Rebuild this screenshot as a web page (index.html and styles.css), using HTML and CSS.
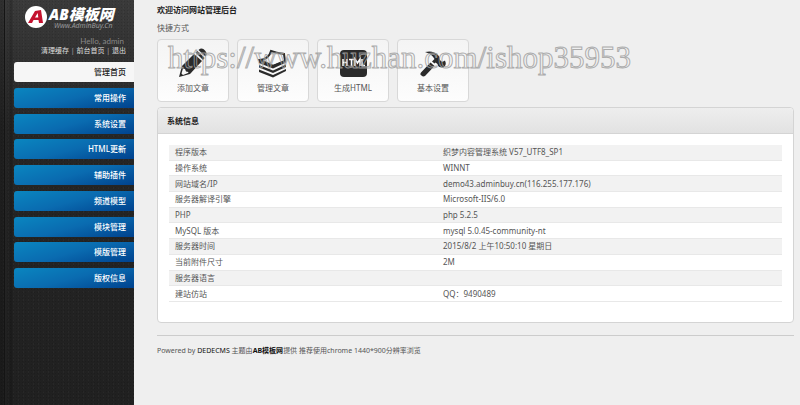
FILE: index.html
```html
<!DOCTYPE html>
<html lang="zh-CN">

<head>
    <meta charset="UTF-8">
    <meta name="viewport" content="width=device-width, initial-scale=1.0">
    <title>网站管理后台</title>
    <link rel="stylesheet" href="styles.css">
</head>

<body>
    <aside class="sidebar">
        <a class="logo" href="#">
            <svg class="logo-icon" viewBox="0 0 22 22" aria-hidden="true">
                <circle cx="11" cy="11" r="11" fill="#fff" />
                <path d="M3 17 L10 5 L16 4 L18 17 L14 17 L13.500 14 L8.500 14 L7 17 Z M10 11.500 L13.300 11.500 L12.700 7 Z" fill="#c4122f" fill-rule="evenodd" />
            </svg>
            <span class="logo-text">
                <strong>AB模板网</strong>
                <em>Www.AdminBuy.Cn</em>
            </span>
        </a>
        <div class="profile">
            <p class="hello">Hello, admin</p>
            <p class="profile-links"><a href="#">清理缓存</a> | <a href="#">前台首页</a> | <a href="#">退出</a></p>
        </div>
        <nav class="menu">
            <a class="current" href="#">管理首页</a>
            <a href="#">常用操作</a>
            <a href="#">系统设置</a>
            <a href="#">HTML更新</a>
            <a href="#">辅助插件</a>
            <a href="#">频道模型</a>
            <a href="#">模块管理</a>
            <a href="#">模版管理</a>
            <a href="#">版权信息</a>
        </nav>
    </aside>

    <main class="content">
        <h1>欢迎访问网站管理后台</h1>
        <p class="intro">快捷方式</p>

        <div class="shortcuts">
            <a class="shortcut" href="#">
                <svg viewBox="0 0 30 30" aria-hidden="true">
                    <path d="M1 29 L4 18 L16 6 L24 13 L12 26 Z" fill="#2b2b2b" />
                    <path d="M5 20.500 L7 21 L8 23.500 L10.500 24 L10 25 L5 27 L3.500 25.500 Z" fill="#fafafa" />
                    <path d="M17.500 4.500 L19.500 3 L26.500 10 L25 12 Z" fill="#2b2b2b" />
                    <path d="M20.500 2 Q24 -1 27 2.500 Q30 5.500 27.500 8.500 Z" fill="#2b2b2b" />
                </svg>
                <span>添加文章</span>
            </a>
            <a class="shortcut" href="#">
                <svg viewBox="0 0 30 30" aria-hidden="true">
                    <path d="M13 3 Q18 5 26 6 L27 13 L15 18 L2 12 Q11 11 13 3 Z" fill="#fafafa" stroke="#2b2b2b" stroke-width="2" />
                    <path d="M1 12 L15 17 L28 12 L28 14.500 L15 20.500 L1 15 Z M1 17 L15 22.500 L28 16.500 L28 19 L15 25 L1 19.500 Z M1 21.500 L15 27 L28 21 L28 23 L15 29.500 L1 24 Z" fill="#2b2b2b" />
                </svg>
                <span>管理文章</span>
            </a>
            <a class="shortcut" href="#">
                <svg viewBox="0 0 30 30" aria-hidden="true">
                    <rect x="2" y="2" width="27" height="27" rx="4" fill="#2b2b2b" />
                    <path d="M5 11 V18 M5 14.500 H9 M9 11 V18 M11 11.500 H16 M13.500 11.500 V18 M17 18 V11 L19.500 15 L22 11 V18 M24 11 V17.500 H27" fill="none" stroke="#fff" stroke-width="1.500" />
                </svg>
                <span>生成HTML</span>
            </a>
            <a class="shortcut" href="#">
                <svg viewBox="0 0 30 30" aria-hidden="true">
                    <path d="M3 24.500 L12.500 14.500 L16.500 18 L7 28 Q5 29 3.500 27.500 Q1.500 26.500 3 24.500 Z" fill="#2b2b2b" />
                    <path d="M7 4 Q15 2 20 7 Q22 9 22 12 Q24 15 27 12.500 Q29 17 25.500 19.500 Q20 20 19.500 16 L17.500 14.500 L16.500 15.500 L14 13.500 L16.500 11 Q14 6 7 4 Z" fill="#2b2b2b" />
                </svg>
                <span>基本设置</span>
            </a>
            <span class="watermark">https://www.huzhan.com/ishop35953</span>
        </div>

        <section class="panel">
            <h2>系统信息</h2>
            <table class="info">
                <tbody>
                    <tr><th scope="row">程序版本</th><td>织梦内容管理系统 V57_UTF8_SP1</td></tr>
                    <tr><th scope="row">操作系统</th><td>WINNT</td></tr>
                    <tr><th scope="row">网站域名/IP</th><td>demo43.adminbuy.cn(116.255.177.176)</td></tr>
                    <tr><th scope="row">服务器解译引擎</th><td>Microsoft-IIS/6.0</td></tr>
                    <tr><th scope="row">PHP</th><td>php 5.2.5</td></tr>
                    <tr><th scope="row">MySQL 版本</th><td>mysql 5.0.45-community-nt</td></tr>
                    <tr><th scope="row">服务器时间</th><td>2015/8/2 上午10:50:10 星期日</td></tr>
                    <tr><th scope="row">当前附件尺寸</th><td>2M</td></tr>
                    <tr><th scope="row">服务器语言</th><td></td></tr>
                    <tr><th scope="row">建站仿站</th><td>QQ：9490489</td></tr>
                </tbody>
            </table>
        </section>

        <footer class="footer">
            Powered by <a href="#">DEDECMS</a> 主题由<a href="#"><b>AB模板网</b></a>提供 推荐使用chrome 1440*900分辨率浏览
        </footer>
    </main>
</body>

</html>
```

FILE: styles.css
```css
* {
    margin: 0;
    padding: 0;
    box-sizing: border-box;
}

body {
    display: flex;
    min-height: 100vh;
    font-family: "Noto Sans", "Noto Sans CJK SC", sans-serif;
    font-size: 8px;
    line-height: 12px;
    color: #555;
    background: #efefef;
}

a {
    color: inherit;
    text-decoration: none;
}

/* sidebar */
.sidebar {
    flex: none;
    width: 134px;
    padding-left: 14px;
    background:
        linear-gradient(90deg, rgba(0, 0, 0, 0.2) 4px, #141414 4px, #141414 5px, transparent 5px, rgba(0, 0, 0, 0.2) 12px, transparent 13px),
        radial-gradient(circle, rgba(0, 0, 0, 0.12) 1px, transparent 1px) 0 0 / 3px 3px,
        radial-gradient(circle, rgba(255, 255, 255, 0.03) 1px, transparent 1px) 1px 2px / 5px 4px,
        linear-gradient(#3a3a3a, #262626 130px, #202020);
}

.logo {
    display: flex;
    gap: 2px;
    padding: 6px 0 0 11px;
    color: #fff;
}

.logo-icon {
    width: 22px;
    height: 22px;
}

.logo-text {
    display: flex;
    flex-direction: column;
}

.logo-text strong,
.logo-text em {
    white-space: nowrap;
}

.logo-text strong {
    font-size: 15px;
    font-style: italic;
    font-weight: 900;
    line-height: 16px;
}

.logo-text em {
    padding-left: 5px;
    font-size: 7px;
    line-height: 8px;
    color: #999;
}

.profile {
    padding: 6px 8px 6px 0;
    text-align: right;
    white-space: nowrap;
    line-height: 10px;
    color: #aaa;
}

.hello {
    padding-right: 2px;
    font-family: Lato, sans-serif;
    color: #888;
}

.profile-links {
    font-size: 7px;
}

.profile-links a {
    color: #ddd;
}

.menu {
    display: flex;
    flex-direction: column;
    justify-content: space-between;
    height: 226px;
}

.menu a {
    padding-right: 8px;
    border-radius: 3px 0 0 3px;
    font-weight: 500;
    line-height: 20px;
    text-align: right;
    color: #fff;
    background: linear-gradient(165deg, #0a86c0, #0a6bb0 50%, #00428e);
}

.menu .current {
    color: #222;
    background: #f6f6f6;
}

/* main column */
.content {
    flex: 1;
    min-width: 0;
    padding: 4px 6px 0 23px;
}

h1 {
    font-size: 8px;
    color: #222;
}

.intro {
    padding: 6px 0 5px;
}

.shortcuts {
    position: relative;
    display: flex;
    gap: 8px;
    margin-bottom: 5px;
}

.shortcut {
    display: flex;
    flex-direction: column;
    align-items: center;
    gap: 4px;
    width: 72px;
    padding: 8px 0 7px;
    border: 1px solid #d8d8d8;
    border-radius: 4px;
    background: linear-gradient(#f4f4f4, #fdfdfd);
}

.shortcut svg {
    width: 30px;
    height: 30px;
}

.watermark {
    position: absolute;
    top: 3px;
    left: 11px;
    font-family: "Liberation Serif", serif;
    font-size: 31px;
    line-height: 32px;
    color: transparent;
    -webkit-text-stroke: 1px rgba(160, 160, 160, 0.85);
    pointer-events: none;
}

.panel {
    padding-bottom: 20px;
    border: 1px solid #d4d4d4;
    border-radius: 4px;
    background: #fff;
}

.panel h2 {
    padding: 0 9px;
    border-bottom: 1px solid #d4d4d4;
    border-radius: 4px 4px 0 0;
    font-size: 8px;
    line-height: 25px;
    color: #222;
    background: linear-gradient(#eee, #e2e2e2);
}

.info {
    width: calc(100% - 22px);
    height: 157px;
    margin: 11px 11px 0;
    border-collapse: collapse;
    table-layout: fixed;
}

.info th,
.info td {
    padding: 0 6px;
    border-bottom: 1px solid #e8e8e8;
    font-weight: normal;
    text-align: left;
}

.info th {
    width: 268px;
}

.info tr:nth-child(odd) {
    background: #f2f2f2;
}

.footer {
    margin-top: 12px;
    padding-top: 9px;
    border-top: 1px solid #ccc;
    font-size: 7px;
}

.footer a {
    color: #111;
}
```
